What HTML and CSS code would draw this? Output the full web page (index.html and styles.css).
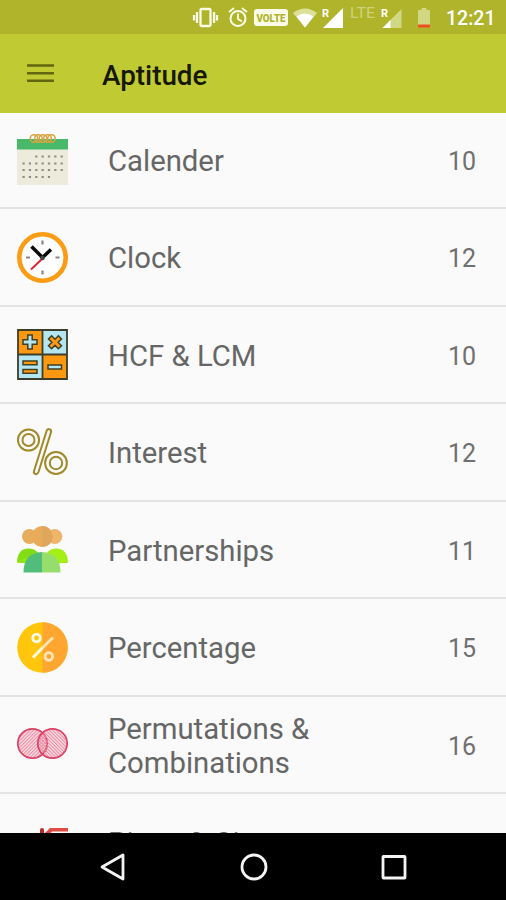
FILE: index.html
```html
<!DOCTYPE html>
<html lang="en">
<head>
  <meta charset="UTF-8">
  <meta name="viewport" content="width=device-width, initial-scale=1.0">
  <title>Aptitude</title>
  <link rel="stylesheet" href="styles.css">
</head>
<body>
  <div class="screen">

    <!-- Status bar -->
    <div class="status-bar">
      <svg class="status-icons" width="260" height="34" viewBox="0 0 260 34">
        <g fill="none" stroke="#fafbe8" stroke-width="2.3">
          <rect x="14.500" y="9" width="10" height="17" rx="1"/>
          <path d="M11 12v11M28 12v11M8 15v5.500M31 15v5.500"/>
          <circle cx="52" cy="18.500" r="7.500" stroke-width="2"/>
          <path d="M52 13.500v5.500l4 2.500M43 12l5-4M61 12l-5-4" stroke-width="1.800"/>
        </g>
        <rect x="68" y="9" width="34" height="17" rx="3" fill="#fafbe8"/>
        <text class="volte" x="85" y="21.500" text-anchor="middle" textLength="29" lengthAdjust="spacingAndGlyphs">VOLTE</text>
        <path d="M107 13Q119 4 131 13L119 27.500z" fill="#dce09a"/>
        <path d="M110.500 16.500Q119 10.500 127.500 16.500L119 27.500z" fill="#fff"/>
        <text class="roaming" x="136" y="17">R</text>
        <path d="M157 8v20h-20z" fill="#fff"/>
        <text class="lte" x="164" y="18" textLength="25" lengthAdjust="spacingAndGlyphs">LTE</text>
        <text class="roaming" x="195" y="17">R</text>
        <path d="M215.500 9v19h-19z" fill="#d2d783"/>
        <path d="M204.500 20v8h-8z" fill="#fff"/>
        <path d="M232 25V11q0-1 1-1h2.500V8h5v2h2.500q1 0 1 1v14z" fill="#d2d783"/>
        <path d="M232 24.500h12v3h-12z" fill="#ec4f24"/>
      </svg>
      <span class="time">12:21</span>
    </div>

    <!-- App bar -->
    <header class="app-bar">
      <svg class="menu-icon" width="27" height="20" viewBox="0 0 27 20">
        <path d="M0 2.500h27M0 10.200h27M0 17.700h27" stroke="#61660f" stroke-width="2.500"/>
      </svg>
      <h1>Aptitude</h1>
    </header>

    <!-- Topics -->
    <ul class="topics">
      <li class="topic">
        <svg class="topic-icon" viewBox="0 0 51 51">
          <path d="M0 11h51v40H0z" fill="#edebdc"/>
          <path d="M0 5h51v10.500H0z" fill="#48b968"/>
          <g fill="none" stroke="#d9a441" stroke-width="1.500">
            <circle cx="17" cy="4.500" r="3.800"/><circle cx="21.500" cy="4.500" r="3.800"/><circle cx="26" cy="4.500" r="3.800"/><circle cx="30.500" cy="4.500" r="3.800"/><circle cx="34.500" cy="4.500" r="3.800"/>
          </g>
          <g stroke="#8f8c80" stroke-width="2.200" stroke-dasharray="2.200 4.150">
            <path d="M18.200 22.500h28.500M5.500 29.500h41.500M5.500 36h41.500M5.500 43h28.500"/>
          </g>
        </svg>
        <span class="topic-name">Calender</span>
        <span class="topic-count">10</span>
      </li>
      <li class="topic">
        <svg class="topic-icon" viewBox="0 0 51 51">
          <circle cx="25.500" cy="25.500" r="23.200" fill="#fff" stroke="#fb9c14" stroke-width="4.600"/>
          <path d="M25.500 8.500v4M25.500 38.500v4M9 25.500h4M38.500 25.500h4" stroke="#858585" stroke-width="2.200"/>
          <path d="M26 26L14 37.500" stroke="#e5202e" stroke-width="1.900"/>
          <path d="M14.500 14.500L25.500 25.500L34 17.500" fill="none" stroke="#0a0a0a" stroke-width="3.500"/>
          <circle cx="25.500" cy="26" r="2.300" fill="#444"/>
        </svg>
        <span class="topic-name">Clock</span>
        <span class="topic-count">12</span>
      </li>
      <li class="topic">
        <svg class="topic-icon" viewBox="0 0 51 51">
          <path d="M1 1h49v49H1z" fill="#ff9811"/>
          <path d="M25.500 1H50v24.500H25.500zM1 25.500h24.500V50H1z" fill="#b4e6f2"/>
          <path d="M1 1h49v49H1zM25.500 1v49M1 25.500h49" fill="none" stroke="#3b3d2b" stroke-width="1.800"/>
          <g stroke="#3c4024" stroke-width="1.500">
            <path d="M10.800 6h4.400v4.800H20v4.400h-4.800V20h-4.400v-4.800H6v-4.400h4.800z" fill="#b4e6f2"/>
            <path d="M10.800 6h4.400v4.800H20v4.400h-4.800V20h-4.400v-4.800H6v-4.400h4.800z" fill="#ff9811" transform="translate(25 .3) rotate(45 13 13)"/>
            <path d="M6 32h14v3.800H6zM6 40.500h14v3.800H6z" fill="#ff9811"/>
            <path d="M31 36h13.500v4H31z" fill="#b4e6f2"/>
          </g>
        </svg>
        <span class="topic-name">HCF &amp; LCM</span>
        <span class="topic-count">10</span>
      </li>
      <li class="topic">
        <svg class="topic-icon" viewBox="0 0 51 51">
          <g fill="none" stroke="#a18a2a" stroke-width="2">
            <circle cx="11.500" cy="13" r="10.600"/><circle cx="11.500" cy="13" r="6"/>
            <circle cx="39" cy="36" r="10.900"/><circle cx="39" cy="36" r="6.200"/>
            <path d="M29.500 4.200Q30.300 1.500 32.500 2.200T34 5.300L21.500 45Q20.500 47.700 18.400 47T17 44z"/>
          </g>
        </svg>
        <span class="topic-name">Interest</span>
        <span class="topic-count">12</span>
      </li>
      <li class="topic">
        <svg class="topic-icon" viewBox="0 0 51 51">
          <circle cx="12.500" cy="12.500" r="7.500" fill="#e7ac5c"/>
          <circle cx="37.800" cy="12.500" r="7.500" fill="#efb56b"/>
          <path d="M0 37.500Q1 24.500 12 24.500q7 0 10 6L12 40z" fill="#82dc12"/>
          <path d="M0 37.500Q0 39 1.500 39H12l4-8zM51 37.500Q51 39 49.500 39H39l-4-8z" fill="#93e415"/>
          <path d="M51 37.500Q50 24.500 39 24.500q-7 0-10 6L40 40z" fill="#a5ef17"/>
          <path d="M6.500 48.500Q6.500 29 25 28v20.500z" fill="#52bd7b"/>
          <path d="M25 28q18.500 1 18.500 20.500H25z" fill="#96de6b"/>
          <circle cx="25.200" cy="12.500" r="10.500" fill="#e8ab5a"/>
          <path d="M25.200 2a10.500 10.500 0 0 1 0 21z" fill="#dfa65c"/>
        </svg>
        <span class="topic-name">Partnerships</span>
        <span class="topic-count">11</span>
      </li>
      <li class="topic">
        <svg class="topic-icon" viewBox="0 0 51 51">
          <circle cx="25.500" cy="25.500" r="25.300" fill="#ffc60c"/>
          <path d="M25.500.2a25.300 25.300 0 0 1 0 50.600z" fill="#ffa630"/>
          <circle cx="19.500" cy="16" r="3.800" fill="none" stroke="#fffbe8" stroke-width="2.800"/>
          <circle cx="31.800" cy="34.500" r="3.800" fill="none" stroke="#ffe6b8" stroke-width="2.800"/>
          <path d="M16 35.500l9.500-9.700" stroke="#fffbe8" stroke-width="3"/>
          <path d="M25.500 25.800L36 15.500" stroke="#ffe3ae" stroke-width="3"/>
        </svg>
        <span class="topic-name">Percentage</span>
        <span class="topic-count">15</span>
      </li>
      <li class="topic">
        <svg class="topic-icon" viewBox="0 0 51 51">
          <defs>
            <pattern id="hatch-left" width="2.400" height="2.400" patternUnits="userSpaceOnUse" patternTransform="rotate(45)">
              <path d="M0 0h1v2.400H0z" fill="#ea8ba2"/>
            </pattern>
            <pattern id="hatch-right" width="2.400" height="2.400" patternUnits="userSpaceOnUse" patternTransform="rotate(-45)">
              <path d="M0 0h1v2.400H0z" fill="#ea8ba2"/>
            </pattern>
          </defs>
          <circle cx="15.500" cy="24.500" r="14.700" fill="#fbdbe2"/>
          <circle cx="35.500" cy="24.500" r="14.700" fill="#fbdbe2"/>
          <g stroke="#db4266" stroke-width="1.700">
            <circle cx="15.500" cy="24.500" r="14.700" fill="url(#hatch-left)"/>
            <circle cx="35.500" cy="24.500" r="14.700" fill="url(#hatch-right)"/>
          </g>
        </svg>
        <span class="topic-name">Permutations &amp; Combinations</span>
        <span class="topic-count">16</span>
      </li>
      <li class="topic">
        <svg class="topic-icon" viewBox="0 0 51 51">
          <path d="M23 16v-3.500q0-1.500 2-1.500t2 1.500V16z" fill="#b92c2a"/>
          <path d="M28 16l5-5h18v3.500H35L32 18z" fill="#e04c43"/>
        </svg>
        <span class="topic-name">Pipes &amp; Cistern</span>
      </li>
    </ul>

    <!-- Navigation bar -->
    <nav class="nav-bar">
      <svg class="nav-icon" viewBox="0 0 30 30"><path d="M25 3v24L4 15z"/></svg>
      <svg class="nav-icon" viewBox="0 0 30 30"><circle cx="15" cy="15" r="12"/></svg>
      <svg class="nav-icon" viewBox="0 0 30 30"><rect x="4" y="4.500" width="22" height="21.500" rx=".5"/></svg>
    </nav>
  </div>
</body>
</html>
```
FILE: styles.css
```css
* {
  box-sizing: border-box;
}

body {
  margin: 0;
  font-family: Roboto, sans-serif;
  background-color: #fafafa;
}

.screen {
  display: flex;
  flex-direction: column;
  height: 900px;
  overflow: hidden;
}

/* Status bar */
.status-bar {
  display: flex;
  flex: none;
  align-items: center;
  justify-content: flex-end;
  height: 34px;
  padding-right: 11px;
  background-color: #afb42b;
}

.status-icons {
  flex: none;
}

.volte {
  font-size: 11px;
  font-weight: 900;
  fill: #afb42b;
}

.roaming {
  font-size: 11px;
  font-weight: bold;
  fill: #fff;
}

.lte {
  font-size: 14px;
  fill: #ced37b;
}

.time {
  width: 49px;
  margin-top: 2px;
  font-size: 19.5px;
  font-weight: 500;
  color: #fff;
  white-space: nowrap;
}

/* App bar */
.app-bar {
  display: flex;
  flex: none;
  align-items: center;
  height: 79px;
  padding-left: 27px;
  background-color: #c0ca33;
}

.menu-icon {
  margin-bottom: 1px;
}

.app-bar h1 {
  margin: 3px 0 0 48px;
  font-size: 27.8px;
  font-weight: 500;
  color: #161704;
}

/* Topic list */
.topics {
  flex: 1;
  min-height: 0;
  margin: -1.5px 0 0;
  padding: 0;
  overflow: hidden;
  list-style: none;
}

.topic {
  display: flex;
  align-items: center;
  height: 97.5px;
  padding: 3px 30px 0 17px;
  border-bottom: 2px solid #e4e4e4;
}

.topic:first-child {
  background-clip: content-box;
}

.topic-icon {
  flex: none;
  width: 51px;
  height: 51px;
  margin-bottom: 2px;
}

.topic-name {
  flex: 1;
  margin-left: 40px;
  padding-right: 100px;
  font-size: 29.3px;
  line-height: 34px;
  color: #666;
}

.topic-count {
  margin-top: 1px;
  font-size: 25px;
  color: #707070;
}

/* Navigation bar */
.nav-bar {
  display: flex;
  flex: none;
  align-items: center;
  justify-content: space-between;
  height: 67px;
  padding: 0 97px 0 98px;
  background-color: #000;
}

.nav-icon {
  width: 30px;
  height: 30px;
  fill: none;
  stroke: #f4f4f4;
  stroke-width: 2.8;
  stroke-linejoin: round;
}
```
